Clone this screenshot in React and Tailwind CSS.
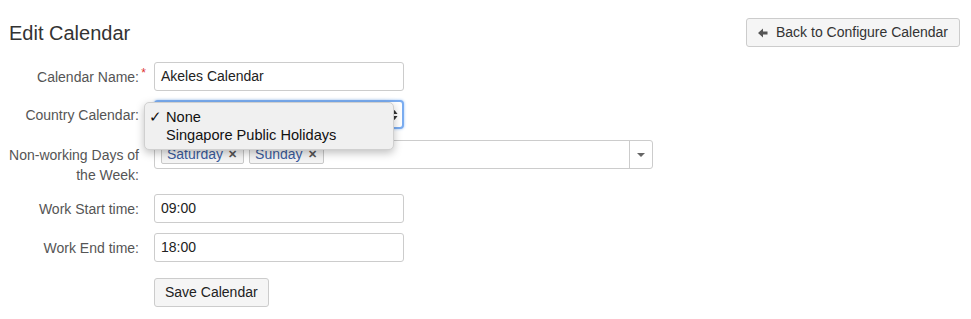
import React from 'react';

function Label({ children, required }) {
    return (
        <div className="relative w-[130px] shrink-0 pt-[1px] text-right text-[14px] leading-[20px] text-[#555]">
            {children}
            {required && <span className="absolute -right-[7px] -top-[3px] text-[12px] text-[#d33]">*</span>}
        </div>
    );
}

function TextInput({ value }) {
    return (
        <div className="flex h-[29px] w-[250px] items-center rounded-[3px] border border-[#ccc] bg-white px-[6px] text-[14px] text-[#222]">
            {value}
        </div>
    );
}

function Tag({ children }) {
    return (
        <span className="flex h-[19px] items-center gap-[5px] rounded-[2px] border border-[#c8c8c8] bg-[#f4f4f4] pl-[5px] pr-[6px] text-[14px] text-[#3a5b9c]">
            {children}
            <span className="text-[11px] font-bold text-[#555]">✕</span>
        </span>
    );
}

export default function App() {
    return (
        <div className="min-h-screen bg-white pl-[9px] pr-[11px] pt-[18px] font-['Liberation_Sans',Arial,sans-serif]">
            <div className="flex items-start justify-between">
                <h1 className="pt-[2px] text-[20px] leading-[26px] text-[#333]">Edit Calendar</h1>
                <button className="flex h-[29px] items-center gap-[8px] rounded-[3px] border border-[#ccc] bg-[#f5f5f5] pl-[11px] pr-[11px] text-[14px] text-[#333]">
                    <svg width="10" height="10" viewBox="0 0 10 10"><path d="M0 5 L5 0.5 L5 3.5 L9.5 3.5 L9.5 6.5 L5 6.5 L5 9.5 Z" fill="#555" /></svg>
                    Back to Configure Calendar
                </button>
            </div>

            <div className="mt-[15px] flex flex-col">
                <div className="flex items-center gap-[15px]">
                    <Label required>Calendar Name:</Label>
                    <TextInput value="Akeles Calendar" />
                </div>

                <div className="relative mt-[9px] flex items-center gap-[15px]">
                    <Label>Country Calendar:</Label>
                    <div className="flex h-[29px] w-[250px] items-center justify-end rounded-[4px] border-2 border-[#7aacf0] bg-white pr-[4px] shadow-[0_0_3px_#9cc3f5]">
                        <svg width="7" height="12" viewBox="0 0 7 12"><path d="M3.5 1 L6.5 5 L0.5 5 Z M3.5 11 L6.5 7 L0.5 7 Z" fill="#333" /></svg>
                    </div>
                    <div className="absolute left-[135px] top-[2px] z-10 w-[250px] rounded-[5px] border border-[#d0d0d0] bg-[#f0f0f0] py-[5px] shadow-[0_3px_8px_rgba(0,0,0,0.25)] text-[14.6px] leading-[18px] text-[#111]">
                        <div className="flex"><span className="w-[21px] pl-[4px]">✓</span>None</div>
                        <div className="flex"><span className="w-[21px]"></span>Singapore Public Holidays</div>
                    </div>
                </div>

                <div className="mt-[11px] flex items-start gap-[15px]">
                    <div className="pt-[4px]"><Label>Non-working Days of the Week:</Label></div>
                    <div className="flex h-[29px] w-[499px] items-stretch rounded-[3px] border border-[#ccc] bg-white">
                        <div className="flex flex-1 items-start gap-[5px] pl-[6px] pt-[4px]">
                            <Tag>Saturday</Tag>
                            <Tag>Sunday</Tag>
                        </div>
                        <div className="flex w-[23px] items-center justify-center border-l border-[#ccc]">
                            <svg width="8" height="4" viewBox="0 0 8 4"><path d="M0 0 L8 0 L4 4 Z" fill="#666" /></svg>
                        </div>
                    </div>
                </div>

                <div className="mt-[9px] flex items-center gap-[15px]">
                    <Label>Work Start time:</Label>
                    <TextInput value="09:00" />
                </div>

                <div className="mt-[10px] flex items-center gap-[15px]">
                    <Label>Work End time:</Label>
                    <TextInput value="18:00" />
                </div>

                <div className="mt-[16px] flex gap-[15px]">
                    <div className="w-[130px] shrink-0" />
                    <button className="h-[29px] rounded-[3px] border border-[#ccc] bg-[#f5f5f5] px-[10px] text-[14px] text-[#222]">Save Calendar</button>
                </div>
            </div>
        </div>
    );
}
